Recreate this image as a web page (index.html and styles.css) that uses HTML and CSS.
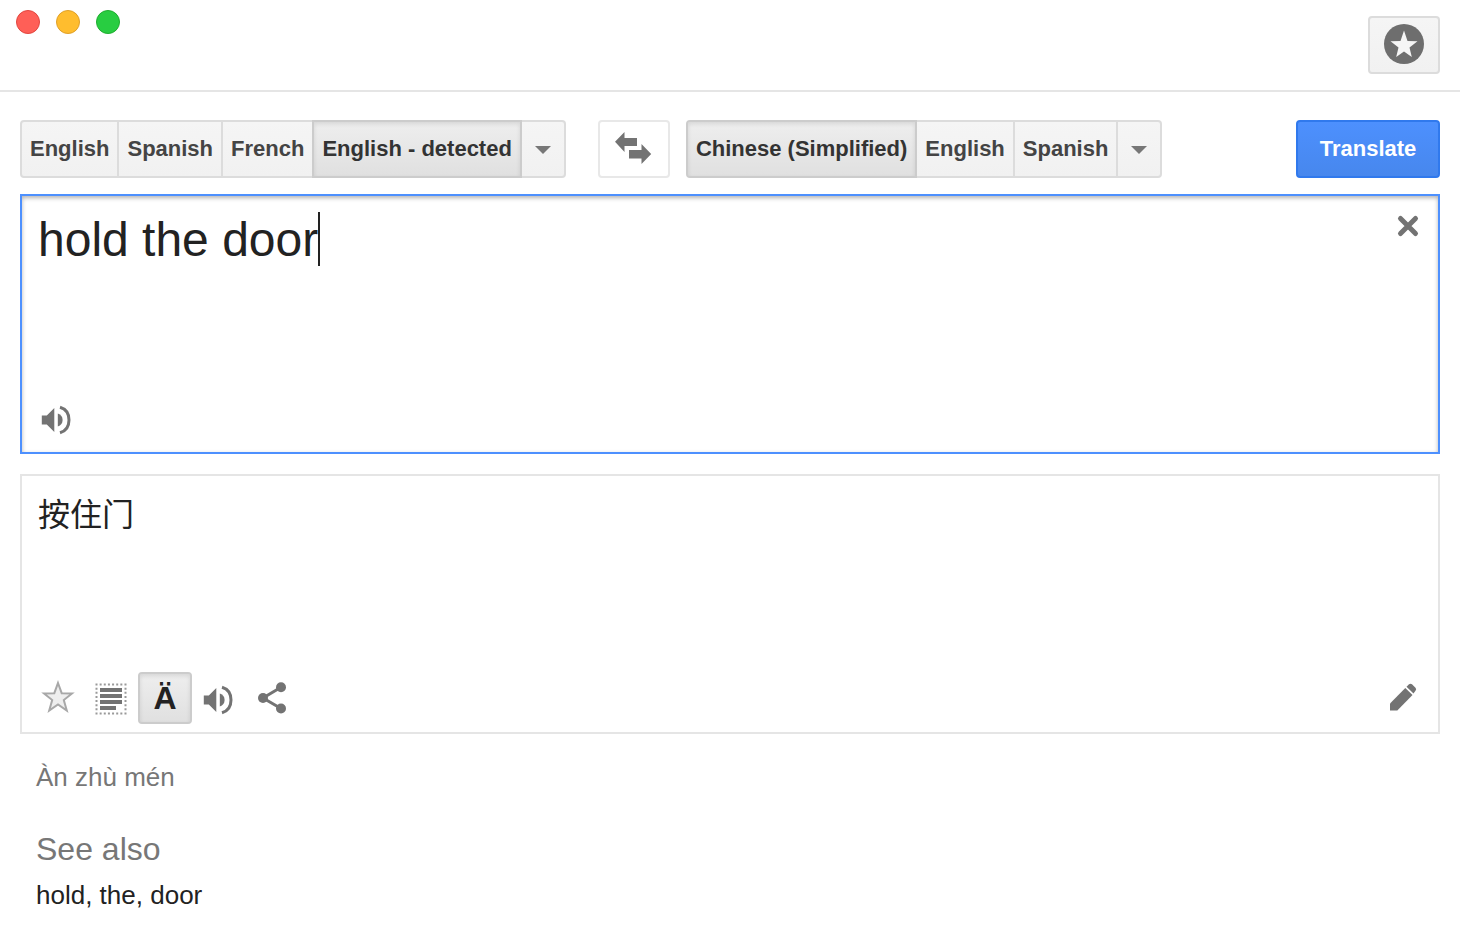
FILE: index.html
```html
<!DOCTYPE html>
<html lang="en">
<head>
  <meta charset="UTF-8">
  <meta name="viewport" content="width=device-width, initial-scale=1.0">
  <title>Translate</title>
  <link rel="stylesheet" href="styles.css">
</head>
<body>

<svg class="sprite" aria-hidden="true">
  <symbol id="icon-speaker" viewBox="0 0 40 40">
    <path d="M4.800 17.500h5L17.300 10v24l-7.500-7.500h-5z"/>
    <path d="M20.800 15.500c3.200 1 4.800 3.500 4.800 6.500s-1.600 5.500-4.800 6.500z"/>
    <path d="M23 9.200c6 1.800 9 7 9 12.800s-3 11-9 12.800" fill="none" stroke="currentColor" stroke-width="3"/>
  </symbol>
</svg>

<header class="titlebar">
  <div class="window-dots">
    <span class="dot dot-close"></span>
    <span class="dot dot-minimize"></span>
    <span class="dot dot-zoom"></span>
  </div>
  <button class="btn phrasebook" aria-label="Phrasebook">
    <svg class="icon" viewBox="0 0 40 40">
      <circle cx="20" cy="19" r="20"/>
      <path fill="#f5f5f5" d="M20 5.500l3.500 10.500 10 .3-8 6.200 2.300 9.500-7.800-5.500-7.800 5.500 2.300-9.500-8-6.200 10-.3z"/>
    </svg>
  </button>
</header>

<main>
  <div class="toolbar">
    <div class="tabs">
      <button class="btn tab">English</button>
      <button class="btn tab">Spanish</button>
      <button class="btn tab">French</button>
      <button class="btn tab selected">English - detected</button>
      <button class="btn tab more" aria-label="More source languages"><span class="arrow"></span></button>
    </div>
    <button class="btn swap" aria-label="Swap languages">
      <svg class="icon" viewBox="0 0 40 40">
        <path d="M1 12.800L10.500 3v6H23v8H10.500v6z"/>
        <path d="M37.200 25L27.500 15v6H15v8.500h12.500V35z"/>
      </svg>
    </button>
    <div class="tabs">
      <button class="btn tab selected">Chinese (Simplified)</button>
      <button class="btn tab">English</button>
      <button class="btn tab">Spanish</button>
      <button class="btn tab more" aria-label="More target languages"><span class="arrow"></span></button>
    </div>
    <button class="btn translate">Translate</button>
  </div>

  <section class="panel source">
    <div class="panel-top">
      <textarea class="source-text" aria-label="Source text" rows="1" spellcheck="false">hold the door</textarea>
      <span class="caret"></span>
      <button class="clear" aria-label="Clear text">
        <svg class="icon" viewBox="0 0 40 40">
          <path d="M12.500 12.500l15 15M27.500 12.500l-15 15" fill="none" stroke="currentColor" stroke-width="5" stroke-linecap="round"/>
        </svg>
      </button>
    </div>
    <div class="panel-tools">
      <button class="tool" aria-label="Listen"><svg class="icon"><use href="#icon-speaker"/></svg></button>
    </div>
  </section>

  <section class="panel result">
    <p class="result-text" lang="zh-CN">按住门</p>
    <div class="panel-tools">
      <button class="tool" aria-label="Save">
        <svg class="icon" viewBox="0 0 40 40">
          <path d="M21 5l3.700 10.200 10.300.3-8.200 6.500 3 10.500-8.800-6-8.800 6 3-10.500L7 15.500l10.300-.3z" fill="#eee" stroke="#a8a8a8" stroke-width="2"/>
        </svg>
      </button>
      <button class="tool" aria-label="Select all">
        <svg class="icon" viewBox="0 0 40 40">
          <path d="M4.500 6.500h31M4.500 35.500h31M5.500 5.500v31M34.500 5.500v31" fill="none" stroke="#999" stroke-width="2" stroke-dasharray="2 2.140"/>
          <path d="M9 12h22M9 18h22M9 24h22M9 30h16" fill="none" stroke="currentColor" stroke-width="4"/>
        </svg>
      </button>
      <button class="tool pressed" aria-label="Show romanization">Ä</button>
      <button class="tool" aria-label="Listen"><svg class="icon"><use href="#icon-speaker"/></svg></button>
      <button class="tool" aria-label="Share">
        <svg class="icon" viewBox="0 0 40 40">
          <path d="M28 9.300L10 20l18 10.500" fill="none" stroke="currentColor" stroke-width="3"/>
          <circle cx="10" cy="20" r="5"/>
          <circle cx="28" cy="9.300" r="5"/>
          <circle cx="28" cy="30.500" r="5"/>
        </svg>
      </button>
      <button class="tool edit" aria-label="Suggest an edit">
        <svg class="icon" viewBox="0 0 40 40">
          <path d="M7 32.500v-7L22.300 10l7.200 7-15.200 15.500z"/>
          <path d="M23.500 8.800L26 6.300q1.500-1.300 3 0l3.500 3.500q1.300 1.500 0 3L30.500 15.500z"/>
        </svg>
      </button>
    </div>
  </section>

  <section class="details">
    <p class="romanization">Àn zhù mén</p>
    <h2>See also</h2>
    <p class="related"><a href="#hold">hold</a>, <a href="#the">the</a>, <a href="#door">door</a></p>
  </section>
</main>

</body>
</html>
```

FILE: styles.css
```css
* {
  box-sizing: border-box;
}

body {
  margin: 0;
  background: #fff;
  color: #222;
  font-family: "Liberation Sans", Arial, sans-serif;
}

button {
  margin: 0;
  padding: 0;
  border: 0;
  background: none;
  font-family: inherit;
}

.sprite {
  display: none;
}

.icon {
  display: block;
  width: 40px;
  height: 40px;
  fill: currentColor;
  overflow: visible;
}

/* title bar */
.titlebar {
  display: flex;
  justify-content: space-between;
  align-items: flex-start;
  padding: 10px 20px 16px 16px;
  border-bottom: 2px solid #e5e5e5;
}

.window-dots {
  display: flex;
  gap: 16px;
}

.dot {
  width: 24px;
  height: 24px;
  border: 1px solid #e2463f;
  border-radius: 50%;
  background: #ff5f57;
}

.dot-minimize {
  border-color: #e0a028;
  background: #ffbd2e;
}

.dot-zoom {
  border-color: #1fad2f;
  background: #28cd41;
}

/* buttons */
.btn {
  display: flex;
  align-items: center;
  justify-content: center;
  height: 58px;
  border: 2px solid #dcdcdc;
  border-radius: 4px;
  background: linear-gradient(#f5f5f5, #f1f1f1);
  color: #444;
  font-size: 22px;
  font-weight: bold;
  white-space: nowrap;
}

.phrasebook {
  width: 72px;
  margin-top: 6px;
  color: #6e6e6e;
}

.toolbar {
  display: flex;
  margin-bottom: 16px;
}

.tabs {
  display: flex;
}

.tab {
  padding: 0 8px;
  border-radius: 0;
}

.tab + .tab {
  margin-left: -2px;
}

.tab:first-child {
  border-radius: 4px 0 0 4px;
}

.tab:last-child {
  border-radius: 0 4px 4px 0;
}

.tab.selected {
  position: relative;
  border-color: #ccc;
  background: linear-gradient(#eee, #e0e0e0);
  box-shadow: inset 0 2px 4px rgba(0, 0, 0, 0.1);
  color: #333;
}

.more {
  width: 46px;
  padding: 2px 0 0;
}

.arrow {
  border: 8px solid transparent;
  border-top-color: #777;
  border-bottom: 0;
}

.swap {
  width: 72px;
  margin: 0 16px 0 32px;
  border-color: #e8e8e8;
  background: #fff;
  color: #737373;
}

.translate {
  width: 144px;
  margin-left: auto;
  border-color: #3079ed;
  background: linear-gradient(#4d90fe, #4787ed);
  color: #fff;
}

/* panels */
main {
  padding: 28px 20px;
}

.panel {
  display: flex;
  flex-direction: column;
  justify-content: space-between;
  min-height: 260px;
  border: 2px solid #e5e5e5;
}

.source {
  margin-bottom: 20px;
  border-color: #4d90fe;
  box-shadow: inset 0 2px 4px rgba(0, 0, 0, 0.3);
}

.panel-top {
  position: relative;
  display: flex;
  align-items: flex-start;
  padding: 8px 8px 0 16px;
}

.source-text {
  flex: 1;
  height: 64px;
  padding: 8px 0 0;
  border: 0;
  outline: 0;
  background: none;
  color: #222;
  font-family: inherit;
  font-size: 48px;
  line-height: 56px;
  resize: none;
  overflow: hidden;
}

.caret {
  position: absolute;
  top: 16px;
  left: 296px;
  width: 2px;
  height: 54px;
  background: #222;
}

.clear {
  display: flex;
  align-items: center;
  justify-content: center;
  width: 44px;
  height: 44px;
  color: #737373;
}

.result-text {
  margin: 0;
  padding: 16px 16px 0;
  font-family: "Noto Sans CJK SC", sans-serif;
  font-size: 32px;
  line-height: 40px;
}

.panel-tools {
  display: flex;
  padding: 8px;
}

.tool {
  display: flex;
  align-items: center;
  justify-content: center;
  width: 54px;
  height: 52px;
  color: #737373;
}

.pressed {
  border: 2px solid #ccc;
  border-radius: 4px;
  background: linear-gradient(#eee, #e0e0e0);
  box-shadow: inset 0 2px 4px rgba(0, 0, 0, 0.1);
  color: #222;
  font-size: 32px;
  font-weight: bold;
}

.edit {
  margin-left: auto;
}

/* details */
.details {
  padding: 27px 16px 0;
  font-size: 26px;
  line-height: 32px;
}

.details p {
  margin: 0;
}

.romanization {
  color: #777;
}

.details h2 {
  margin: 36px 0 10px;
  color: #777;
  font-size: 32px;
  font-weight: normal;
  line-height: 40px;
}

.related a {
  color: inherit;
  text-decoration: none;
}
```
